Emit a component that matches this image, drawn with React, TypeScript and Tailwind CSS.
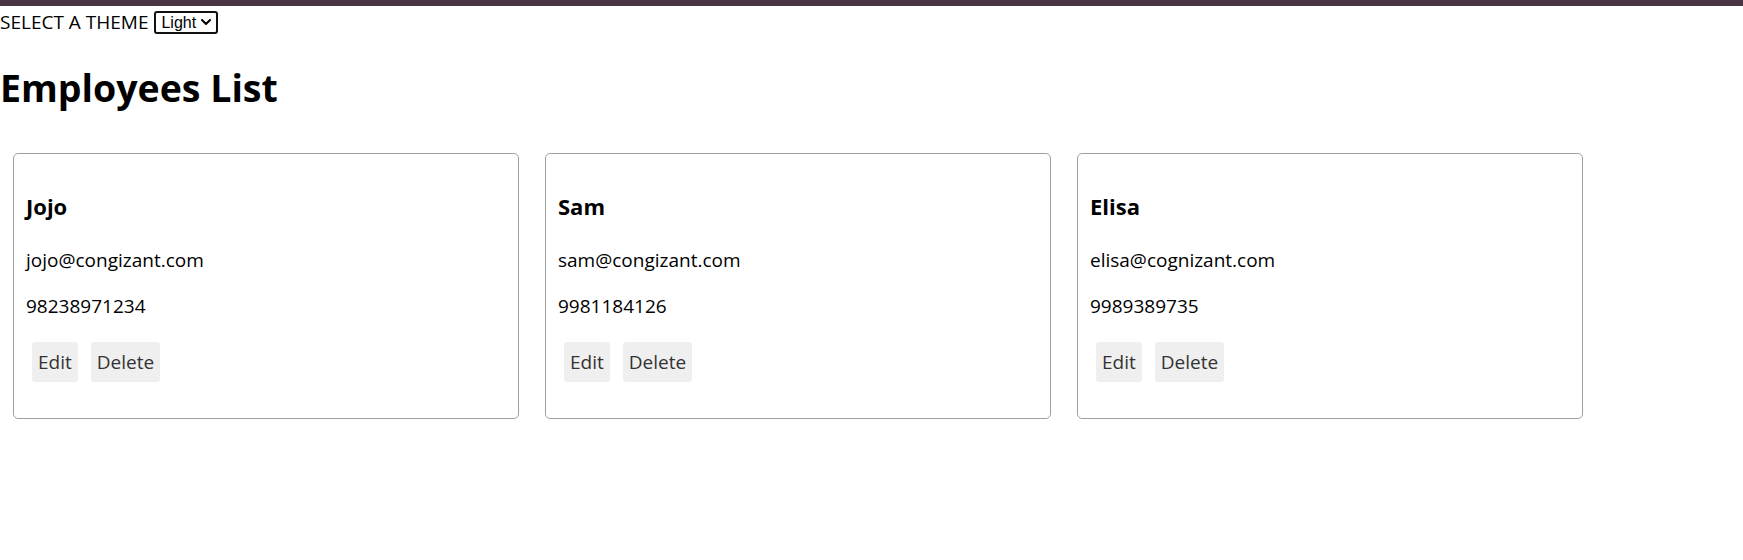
const employees = [
  { id: 1, name: 'Jojo', email: 'jojo@congizant.com', phone: '98238971234' },
  { id: 2, name: 'Sam', email: 'sam@congizant.com', phone: '9981184126' },
  { id: 3, name: 'Elisa', email: 'elisa@cognizant.com', phone: '9989389735' },
]

function EmployeeCard({ name, email, phone }: { name: string; email: string; phone: string }) {
  return (
    <div className="w-[506px] h-[266px] border border-[#a0a0a0] rounded-[5px] pl-[12px] pt-[38px]">
      <h3 className="text-[22px] font-bold leading-[29px]">{name}</h3>
      <p className="mt-[27px] leading-[25px]">{email}</p>
      <p className="mt-[21px] leading-[25px]">{phone}</p>
      <div className="flex gap-[13px] mt-[23px] pl-[6px]">
        <button type="button" className="h-[40px] px-[6px] bg-[#efefef] text-[#333] rounded-[3px] leading-[25px]">
          Edit
        </button>
        <button type="button" className="h-[40px] px-[6px] bg-[#efefef] text-[#333] rounded-[3px] leading-[25px]">
          Delete
        </button>
      </div>
    </div>
  )
}

export default function App() {
  return (
    <div className="min-h-[560px] bg-white text-black text-[19px] font-['Segoe_UI','Open_Sans',sans-serif]">
      <div className="h-[6px] bg-[#4a3545]" />
      <div className="flex items-center h-[32px]">
        <span>SELECT A THEME</span>
        <div className="ml-[6px] flex items-center h-[23px] w-[64px] border-2 border-[#111] rounded-[3px] pl-[5px] pr-[2px] text-[16px] font-['Liberation_Sans',Arial,sans-serif]">
          <span className="leading-[19px]">Light</span>
          <svg className="ml-[4px]" width="12" height="10" viewBox="0 0 12 10" fill="none">
            <path d="M2 3 L6 7 L10 3" stroke="#000" strokeWidth="2" strokeLinecap="round" strokeLinejoin="round" />
          </svg>
        </div>
      </div>
      <h1 className="mt-[27px] text-[37.5px] font-bold leading-[45px]">Employees List</h1>
      <div className="flex gap-[26px] pl-[13px] mt-[43px]">
        {employees.map(e => (
          <EmployeeCard key={e.id} name={e.name} email={e.email} phone={e.phone} />
        ))}
      </div>
    </div>
  )
}
